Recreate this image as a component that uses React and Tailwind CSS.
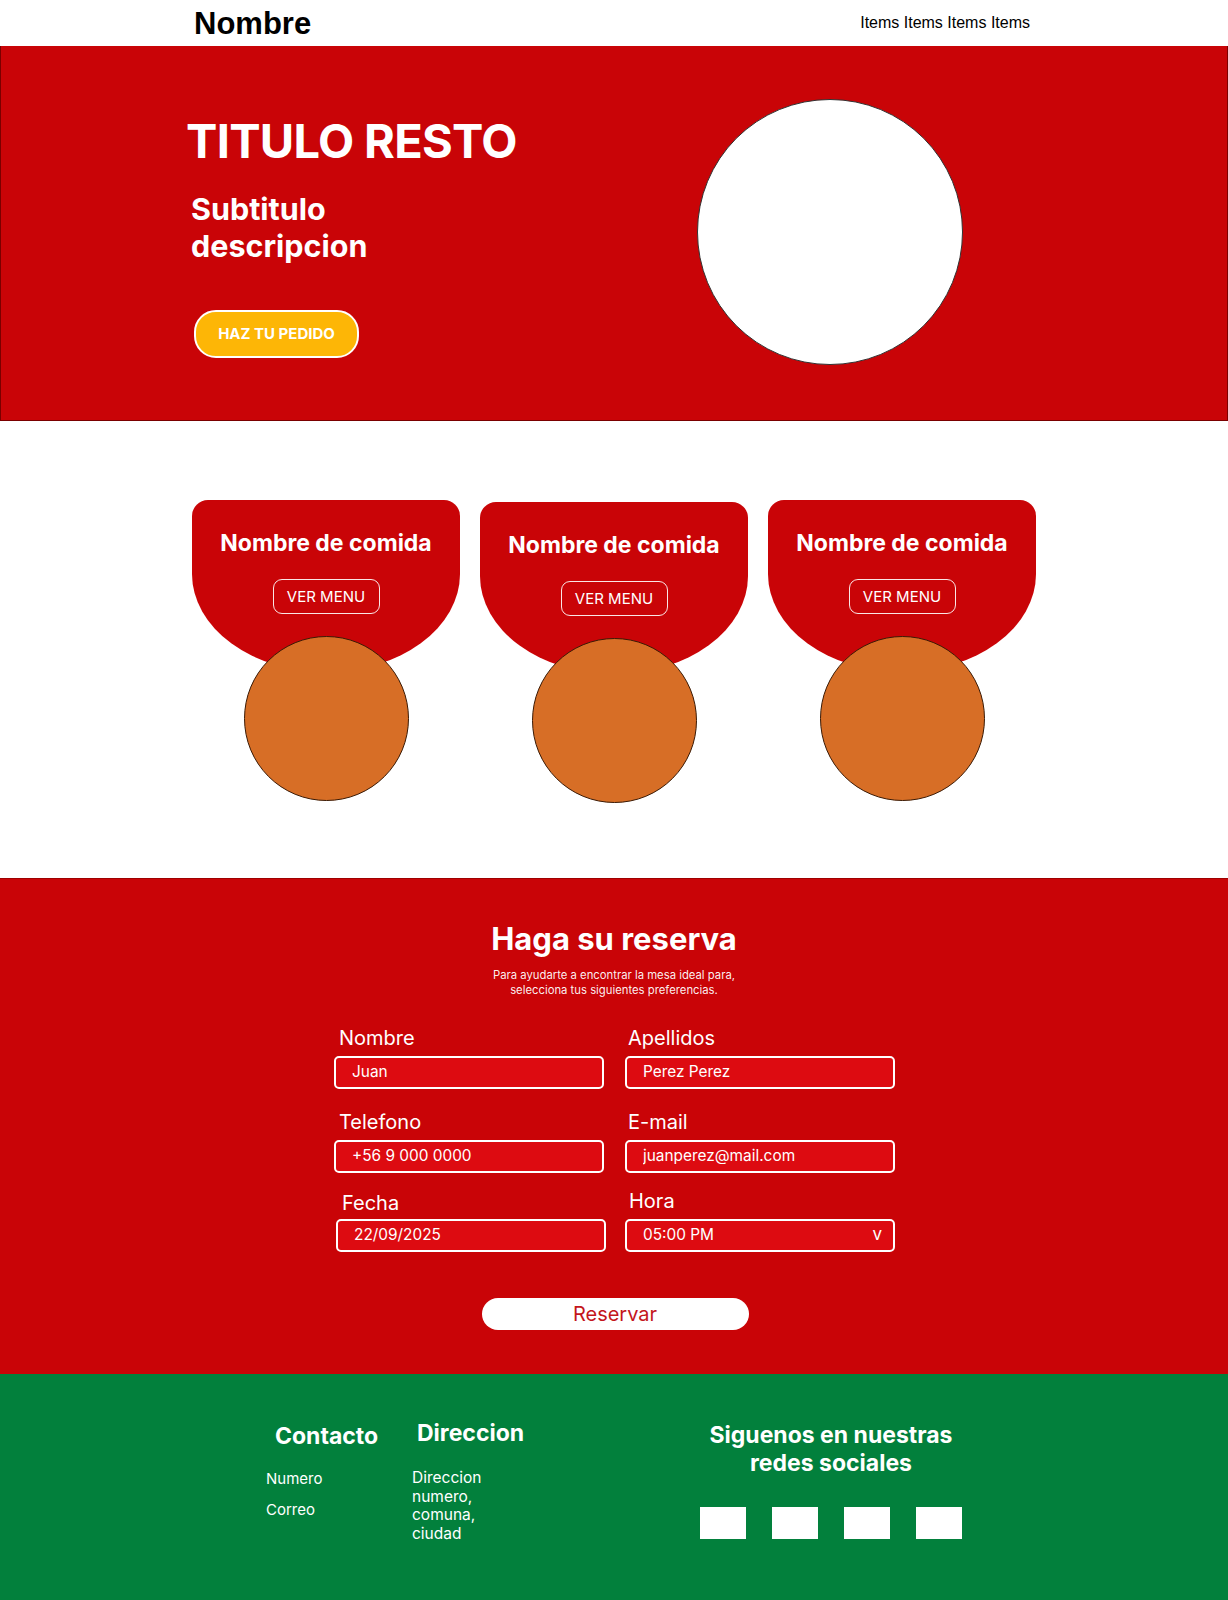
import React from "react";

const inter = { fontFamily: "Inter, 'Noto Sans', sans-serif" };

function FoodCard({ offset }) {
  return (
    <div className={`flex w-[268px] flex-col items-center ${offset}`}>
      <div className="flex h-[172px] w-full flex-col items-center rounded-t-[16px] rounded-b-[134px_98px] bg-[#c90407] pt-[27px]">
        <h3 className="text-[23px] font-bold leading-8 text-white">Nombre de comida</h3>
        <button className="mt-[20px] h-[35px] w-[107px] rounded-[9px] border border-white/90 pt-[1px] text-[15px] text-white">
          VER MENU
        </button>
      </div>
      <div className="-mt-[36px] h-[165px] w-[165px] rounded-full border border-[#3a1a05] bg-[#d76e26]"></div>
    </div>
  );
}

function Field({ label, value, labelPad = "pl-[5px]" }) {
  return (
    <div>
      <label className={`block text-xl leading-7 text-white ${labelPad}`}>{label}</label>
      <input
        readOnly
        defaultValue={value}
        className="mt-1 block h-[33px] w-[270px] rounded-[5px] border-2 border-white bg-[#dd0b11] pl-4 pb-[2px] text-[15.4px] text-white outline-none"
      />
    </div>
  );
}

export default function App() {
  return (
    <div className="w-[1228px] bg-white" style={inter}>
      {/* Header */}
      <header
        className="flex h-[46px] items-center justify-between pl-[194px] pr-[198px]"
        style={{ fontFamily: "'Liberation Sans', Arial, sans-serif" }}
      >
        <span className="text-[31px] font-bold leading-none text-black">Nombre</span>
        <nav className="text-base leading-none text-black">Items Items Items Items</nav>
      </header>

      {/* Hero */}
      <section className="flex h-[375px] border-x border-b border-[#7a0000] bg-[#c90407] pl-[185px]">
        <div className="w-[511px] pt-[71px]">
          <h1 className="text-[47px] font-bold leading-none tracking-[-0.015em] text-white">TITULO RESTO</h1>
          <p className="ml-[5px] mt-[26px] text-[30.5px] font-bold leading-[37px] text-white">
            Subtitulo
            <br />
            descripcion
          </p>
          <button className="ml-[8px] mt-[46px] h-[48px] w-[165px] rounded-[22px] border-2 border-white bg-[#fdb606] text-[15px] font-bold text-white">
            HAZ TU PEDIDO
          </button>
        </div>
        <div className="mt-[53px] h-[266px] w-[266px] rounded-full border border-[#333] bg-white"></div>
      </section>

      {/* Cards */}
      <section className="flex h-[457px] justify-center gap-5 pt-[79px]">
        <FoodCard offset="" />
        <FoodCard offset="mt-[2px]" />
        <FoodCard offset="" />
      </section>

      {/* Reserva */}
      <section className="flex h-[496px] flex-col items-center border-t border-[#9e0000] bg-[#c90407] pt-[40px]">
        <h2 className="text-[31px] font-bold leading-10 text-white">Haga su reserva</h2>
        <p className="mt-[9px] text-center text-[11.3px] leading-[15px] text-white/95">
          Para ayudarte a encontrar la mesa ideal para,
          <br />
          selecciona tus siguientes preferencias.
        </p>

        <div className="ml-[1px] mt-[26px] w-[561px]">
          <div className="flex gap-[21px]">
            <Field label="Nombre" value="Juan" />
            <Field label="Apellidos" value="Perez Perez" labelPad="pl-[3px]" />
          </div>
          <div className="mt-[19px] flex gap-[21px]">
            <Field label="Telefono" value="+56 9 000 0000" />
            <Field label="E-mail" value="juanperez@mail.com" labelPad="pl-[3px]" />
          </div>
          <div className="mt-[16px] flex gap-[19px]">
            <div className="ml-[2px]">
              <label className="block pl-[6px] text-xl leading-7 text-white">Fecha</label>
              <input
                readOnly
                defaultValue="22/09/2025"
                className="mt-[2px] block h-[33px] w-[270px] rounded-[5px] border-2 border-white bg-[#dd0b11] pl-4 pb-[2px] text-[15.4px] text-white outline-none"
              />
            </div>
            <div className="-mt-[2px]">
              <label className="block pl-[4px] text-xl leading-7 text-white">Hora</label>
              <div className="mt-[4px] flex h-[33px] w-[270px] items-center justify-between rounded-[5px] border-2 border-white bg-[#dd0b11] pl-4 pr-[11px] pb-[2px] text-[15.4px] text-white">
                <span>05:00 PM</span>
                <span className="text-[17px]">v</span>
              </div>
            </div>
          </div>
        </div>

        <button className="ml-[2px] mt-[46px] h-[32px] w-[267px] rounded-full bg-white text-xl leading-none text-[#c4161c]">
          Reservar
        </button>
      </section>

      {/* Footer */}
      <footer className="flex h-[226px] bg-[#02803c] pl-[266px] text-white">
        <div className="w-[146px] pt-[48px]">
          <h4 className="ml-[9px] text-[23px] font-bold leading-7">Contacto</h4>
          <p className="mt-[19px] text-[15px] leading-5">Numero</p>
          <p className="mt-[11px] text-[15px] leading-5">Correo</p>
        </div>
        <div className="w-[269px] pt-[45px]">
          <h4 className="ml-[5px] text-[23px] font-bold leading-7">Direccion</h4>
          <p className="mt-[22px] w-[90px] text-[15.5px] leading-[18.5px]">
            Direccion numero, comuna, ciudad
          </p>
        </div>
        <div className="w-[300px] pt-[47px] text-center">
          <h4 className="text-[23px] font-bold leading-7">
            Siguenos en nuestras
            <br />
            redes sociales
          </h4>
          <div className="mt-[30px] flex justify-center gap-[26px]">
            <div className="h-[32px] w-[46px] bg-white"></div>
            <div className="h-[32px] w-[46px] bg-white"></div>
            <div className="h-[32px] w-[46px] bg-white"></div>
            <div className="h-[32px] w-[46px] bg-white"></div>
          </div>
        </div>
      </footer>
    </div>
  );
}
